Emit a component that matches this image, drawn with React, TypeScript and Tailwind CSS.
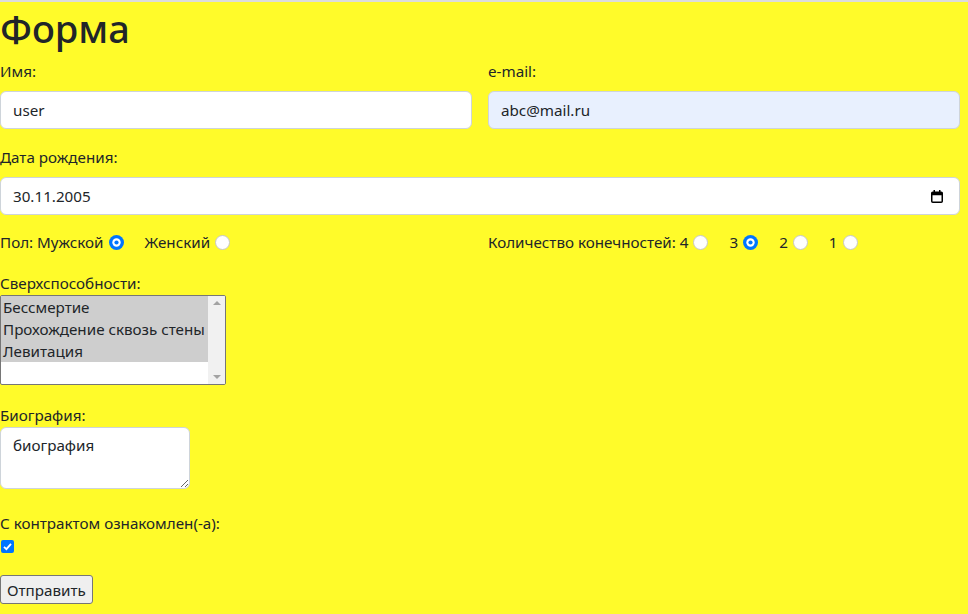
import React from "react";

const fieldClass =
  "block w-full h-[38px] rounded-md border border-[#ced4da] px-3 text-[15.2px] text-[#212529] outline-none";

function Radio({ checked }: { checked?: boolean }) {
  return (
    <svg width="15" height="15" viewBox="0 0 15 15" className="block shrink-0">
      {checked ? (
        <>
          <circle cx="7.5" cy="7.5" r="7.5" fill="#0075ff" />
          <circle cx="7.5" cy="7.5" r="4.2" fill="#ffffff" />
          <circle cx="7.5" cy="7.5" r="2.1" fill="#0075ff" />
        </>
      ) : (
        <circle cx="7.5" cy="7.5" r="7" fill="#ffffff" stroke="#c6c6c6" strokeWidth="1" />
      )}
    </svg>
  );
}

function CalendarIcon() {
  return (
    <svg width="12" height="13" viewBox="0 0 12 13" className="text-black">
      <rect x="0.75" y="2.25" width="10.5" height="10" rx="1" fill="none" stroke="currentColor" strokeWidth="1.5" />
      <rect x="0.75" y="2.25" width="10.5" height="3" fill="currentColor" />
      <rect x="2.5" y="0" width="1.5" height="3" fill="currentColor" />
      <rect x="8" y="0" width="1.5" height="3" fill="currentColor" />
    </svg>
  );
}

function Checkbox() {
  return (
    <svg width="13" height="13" viewBox="0 0 13 13" className="block">
      <rect x="0" y="0" width="13" height="13" rx="2" fill="#0075ff" />
      <path d="M3 6.8 L5.4 9.2 L10 3.8" fill="none" stroke="#ffffff" strokeWidth="1.8" />
    </svg>
  );
}

export default function App() {
  const powers = ["Бессмертие", "Прохождение сквозь стены", "Левитация"];

  return (
    <div className="min-h-[614px] border-t-2 border-[#dcdcdc] bg-[#fffb2a] pr-2 font-['Segoe_UI','Noto_Sans',sans-serif] text-[15.2px] text-[#212529]">
      <h1 className="pt-1 text-[38px] leading-[44px] font-medium">Форма</h1>

      <div className="mt-[9px] grid grid-cols-2 gap-4">
        <div>
          <label className="block leading-6">Имя:</label>
          <input className={`${fieldClass} mt-2 bg-white`} defaultValue="user" />
        </div>
        <div>
          <label className="block leading-6">e-mail:</label>
          <input className={`${fieldClass} mt-2 bg-[#e8f0fe]`} defaultValue="abc@mail.ru" />
        </div>
      </div>

      <label className="mt-4 block leading-6">Дата рождения:</label>
      <div className="mt-2 flex h-[38px] items-center justify-between rounded-md border border-[#ced4da] bg-white pr-4 pl-3">
        <span>30.11.2005</span>
        <CalendarIcon />
      </div>

      <div className="mt-[15px] grid grid-cols-2 gap-4 leading-6">
        <div className="flex items-center">
          <span>Пол: Мужской</span>
          <span className="ml-[5px]"><Radio checked /></span>
          <span className="ml-[21px]">Женский</span>
          <span className="ml-[5px]"><Radio /></span>
        </div>
        <div className="flex items-center">
          <span>Количество конечностей: 4</span>
          <span className="ml-[5px]"><Radio /></span>
          <span className="ml-[21px]">3</span>
          <span className="ml-[5px]"><Radio checked /></span>
          <span className="ml-[21px]">2</span>
          <span className="ml-[5px]"><Radio /></span>
          <span className="ml-[21px]">1</span>
          <span className="ml-[5px]"><Radio /></span>
        </div>
      </div>

      <label className="mt-[18px] block leading-[23px]">Сверхспособности:</label>
      <div className="flex h-[90px] w-[226px] overflow-hidden rounded-[2px] border border-[#767676] bg-white">
        <div className="flex-1">
          {powers.map((p) => (
            <div key={p} className="bg-[#cecece] pl-[2px] leading-[22px] whitespace-nowrap">
              {p}
            </div>
          ))}
        </div>
        <div className="flex w-[17px] flex-col items-center justify-between bg-[#f1f1f1] py-[5px]">
          <span className="h-0 w-0 border-x-[4px] border-b-[4px] border-x-transparent border-b-[#a3a3a3]" />
          <span className="h-0 w-0 border-x-[4px] border-t-[4px] border-x-transparent border-t-[#a3a3a3]" />
        </div>
      </div>

      <label className="mt-[18px] block leading-6">Биография:</label>
      <textarea
        className="block h-[62px] w-[190px] rounded-md border border-[#ced4da] bg-white px-3 py-[6px] text-[15.2px] outline-none"
        defaultValue="биография"
      />

      <label className="mt-[22px] block leading-6">С контрактом ознакомлен(-а):</label>
      <div className="mt-[5px] ml-px">
        <Checkbox />
      </div>

      <button className="mt-[22px] block h-[29px] rounded-[3px] border border-[#767676] bg-[#efefef] px-[6px] leading-5">
        Отправить
      </button>
    </div>
  );
}
